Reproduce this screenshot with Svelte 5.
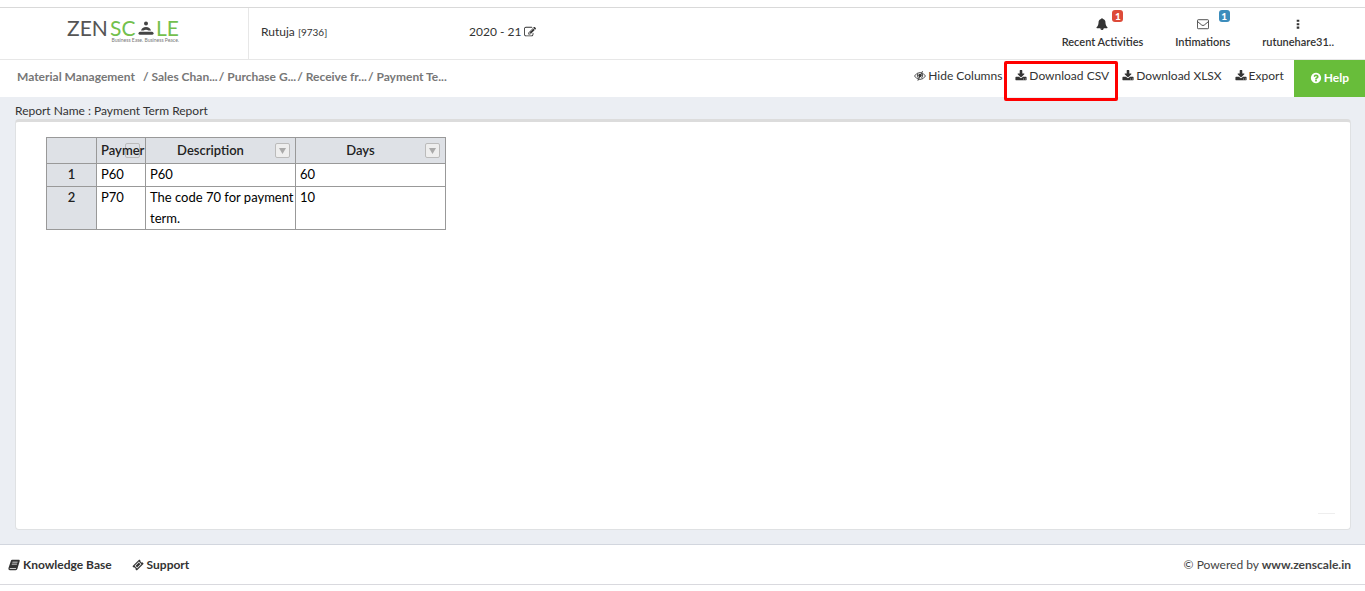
<script>
  const paths = {
    bell: 'M912 1696q0-16-16-16-59 0-101.500-42.500t-42.500-101.500q0-16-16-16t-16 16q0 73 51.500 124.500t124.500 51.500q16 0 16-16zm816-288q0 52-38 90t-90 38h-448q0 106-75 181t-181 75-181-75-75-181h-448q-52 0-90-38t-38-90q50-42 91-88t85-119.500 74.500-158.500 50-206 19.500-260q0-152 117-282.500t307-158.500q-8-19-8-39 0-40 28-68t68-28 68 28 28 68q0 20-8 39 190 28 307 158.500t117 282.500q0 139 19.500 260t50 206 74.500 158.500 85 119.500 91 88z',
    download: 'M1344 1344q0-26-19-45t-45-19-45 19-19 45 19 45 45 19 45-19 19-45zm256 0q0-26-19-45t-45-19-45 19-19 45 19 45 45 19 45-19 19-45zm128-224v320q0 40-28 68t-68 28h-1472q-40 0-68-28t-28-68v-320q0-40 28-68t68-28h465l135 136q58 56 136 56t136-56l136-136h464q40 0 68 28t28 68zm-325-569q17 41-14 70l-448 448q-18 19-45 19t-45-19l-448-448q-31-29-14-70 17-39 59-39h256v-448q0-26 19-45t45-19h256q26 0 45 19t19 45v448h256q42 0 59 39z',
    question: 'M1024 1376v-192q0-14-9-23t-23-9h-192q-14 0-23 9t-9 23v192q0 14 9 23t23 9h192q14 0 23-9t9-23zm256-672q0-88-55.500-163t-138.500-116-170-41q-243 0-371 213-15 24 8 42l132 100q7 6 19 6 16 0 25-12 53-68 86-92 34-24 86-24 48 0 85.500 26t37.500 59q0 38-20 61t-68 45q-63 28-115.500 86.500t-52.500 125.500v36q0 14 9 23t23 9h192q14 0 23-9t9-23q0-19 21.500-49.500t54.500-49.500q32-18 49-28.500t46-35 44.500-48 28-60.500 12.500-81zm384 192q0 209-103 385.500t-279.500 279.500-385.500 103-385.500-103-279.500-279.500-103-385.500 103-385.500 279.500-279.500 385.500-103 385.500 103 279.500 279.500 103 385.500z',
    edit: 'M888 1184l116-116-152-152-116 116v56h96v96h56zm440-720q-16-16-33 1l-350 350q-17 17-1 33t33-1l350-350q17-17 1-33zm80 594v190q0 119-84.500 203.500t-203.500 84.500h-832q-119 0-203.500-84.500t-84.500-203.500v-832q0-119 84.500-203.500t203.500-84.500h832q63 0 117 25 15 7 18 23 3 17-9 29l-49 49q-14 14-32 8-23-6-45-6h-832q-66 0-113 47t-47 113v832q0 66 47 113t113 47h832q66 0 113-47t47-113v-126q0-13 9-22l64-64q15-15 35-7t20 29zm-96-738l288 288-672 672h-288v-288zm444 132l-92 92-288-288 92-92q28-28 68-28t68 28l152 152q28 28 28 68t-28 68z'
  };
  const crumbs = ['Sales Chan...', 'Purchase G...', 'Receive fr...', 'Payment Te...'];
  const columns = ['Payment Term Code', 'Description', 'Days'];
  const rows = [
    ['P60', 'P60', '60'],
    ['P70', 'The code 70 for payment\nterm.', '10']
  ];
</script>

{#snippet icon(name)}
  <svg class="icon" viewBox="0 0 1792 1792" aria-hidden="true"><path d={paths[name]} /></svg>
{/snippet}

<div class="page">
  <header>
    <a class="logo" href="#home">
      <span class="wordmark">
        <span>ZEN</span>
        <span class="green">SC</span>
        <svg class="figure" viewBox="0 0 16 14" aria-hidden="true">
          <circle cx="8" cy="2.500" r="2" />
          <path d="M3 9.500q1-3.500 5-3.500t5 3.500h-2.500q-2.500-1.500-5 0z" />
          <path d="M2 10.700h12q1.500 0 1.500 1.500t-1.500 1.500h-12q-1.500 0-1.500-1.500t1.500-1.500z" />
        </svg>
        <span class="green">LE</span>
      </span>
      <span class="tagline">Business Ease. Business Peace.</span>
    </a>
    <div class="user">Rutuja <small>[9736]</small></div>
    <button class="year">2020 - 21 {@render icon('edit')}</button>
    <nav class="tools">
      <a href="#activities">
        <span class="glyph">{@render icon('bell')}<b class="badge red">1</b></span>
        Recent Activities
      </a>
      <a href="#intimations">
        <span class="glyph">
          <svg class="icon" viewBox="0 0 14 14" aria-hidden="true">
            <path class="line" d="M1.500 2h11q1 0 1 1v8.500q0 1-1 1h-11q-1 0-1-1v-8.500q0-1 1-1zM.7 4.200l4.800 4q1.500 1.200 3 0l4.800-4" />
          </svg>
          <b class="badge blue">1</b>
        </span>
        Intimations
      </a>
      <a href="#account">
        <span class="glyph">
          <svg class="icon" viewBox="0 0 14 14" aria-hidden="true">
            <path d="M5.500 2h3v2.500h-3zM5.500 6h3v2.500h-3zM5.500 10h3v2.500h-3z" />
          </svg>
        </span>
        rutunehare31..
      </a>
    </nav>
  </header>

  <div class="bar">
    <nav class="crumbs">
      <a class="root" href="#material">Material Management</a>
      {#each crumbs as crumb}<span>/ <a href="#crumb">{crumb}</a></span>{/each}
    </nav>
    <div class="actions">
      <button>
        <svg class="icon" viewBox="0 0 14 14" aria-hidden="true">
          <path class="line" d="M.6 7q2.400-4 6.400-4t6.400 4q-2.400 4-6.400 4t-6.400-4z" />
          <path class="line" d="M4.300 4.500q-1.300 3 1 5M9.700 4.500q1.300 3-1 5M10 1.300l-5.500 11.200" />
          <circle cx="7" cy="6.500" r="2" />
        </svg>
        Hide Columns
      </button>
      <button class="marked">{@render icon('download')} Download CSV</button>
      <button>{@render icon('download')} Download XLSX</button>
      <button class="export">{@render icon('download')} Export</button>
      <button class="help">{@render icon('question')} Help</button>
    </div>
  </div>

  <main>
    <h1>Report Name : Payment Term Report</h1>
    <section>
      <table>
        <colgroup><col class="number" /><col class="code" /><col /><col /></colgroup>
        <thead>
          <tr>
            <td></td>
            {#each columns as column, i}
              <th scope="col">
                <div class="head" class:clipped={i === 0}>
                  <button class="filter" aria-label="Filter {column}">
                    <svg viewBox="0 0 8 8" aria-hidden="true"><path d="M0 1h8l-4 7z" /></svg>
                  </button>
                  <span>{i === 0 ? 'Paymer' : column}</span>
                </div>
              </th>
            {/each}
          </tr>
        </thead>
        <tbody>
          {#each rows as row, i}
            <tr>
              <th scope="row">{i + 1}</th>
              {#each row as cell}<td>{cell}</td>{/each}
            </tr>
          {/each}
        </tbody>
      </table>
      <hr />
    </section>
  </main>

  <footer>
    <a href="#knowledge">
      <svg class="icon" viewBox="0 0 14 14" aria-hidden="true">
        <path fill-rule="evenodd" d="M5 1h8q1 .3.700 1.300l-2.700 9.200q-.4 1.500-2 1.500h-7q-2-.3-1.500-2.200l2.700-8.300q.4-1.500 1.800-1.500zM5.300 3.300l-.3.900h6l.3-.9zM4.600 5.400l-.3.900h6l.3-.9zM2 10.800q-.3 1 .6 1h6q.7 0 .9-1z" />
      </svg>
      Knowledge Base
    </a>
    <a href="#support">
      <svg class="icon" viewBox="0 0 14 14" aria-hidden="true">
        <path fill-rule="evenodd" d="M8.500.5l1.500 1.500q-.3 1.200.6 1.800.8.500 1.500.1l1.500 1.600-8 8-1.600-1.600q.4-1-.3-1.700-.8-.6-1.700-.2l-1.500-1.500zM8 3l-5 5 3 3 5-5zM8 4.200l1.800 1.800-3.800 3.800-1.800-1.800z" />
      </svg>
      Support
    </a>
    <p>© Powered by <a href="#zenscale">www.zenscale.in</a></p>
  </footer>
</div>

<style>
  :global(body) {
    margin: 0;
  }
  .page {
    box-sizing: border-box;
    display: flex;
    flex-direction: column;
    min-height: 100vh;
    padding: 7px 0 6px;
    background: #fff;
    color: #333;
    font: 12px/18px Lato, sans-serif;
  }
  a {
    color: inherit;
    text-decoration: none;
  }
  button {
    padding: 0;
    border: 0;
    background: none;
    color: inherit;
    font: inherit;
    white-space: nowrap;
  }
  .icon {
    width: 12px;
    height: 12px;
    fill: currentColor;
    vertical-align: -2px;
  }
  .line {
    fill: none;
    stroke: currentColor;
  }

  header {
    display: flex;
    height: 51px;
    border-top: 1px solid #d9d9d9;
    border-bottom: 1px solid #e7e7e7;
  }
  .logo {
    box-sizing: border-box;
    display: flex;
    flex-direction: column;
    width: 249px;
    padding: 10px 69px 0 67px;
    border-right: 1px solid #e7e7e7;
    color: #555;
  }
  .wordmark {
    display: flex;
    align-items: center;
    justify-content: space-between;
    font-size: 21px;
    line-height: 20px;
  }
  .green {
    color: #73c04d;
  }
  .figure {
    width: 16px;
    height: 14px;
    fill: #444;
  }
  .tagline {
    align-self: flex-end;
    color: #777;
    font-size: 5px;
    line-height: 5px;
  }
  .user {
    width: 208px;
    padding: 15px 0 0 12px;
  }
  small {
    font-size: 10px;
  }
  .year {
    align-self: flex-start;
    padding-top: 15px;
  }
  .tools {
    display: flex;
    gap: 32px;
    margin-left: auto;
    padding-right: 31px;
    font-size: 11px;
    font-weight: 600;
  }
  .tools a {
    display: flex;
    flex-direction: column;
    align-items: center;
  }
  .glyph {
    position: relative;
    height: 16px;
    padding-top: 9px;
    line-height: 14px;
  }
  .badge {
    position: absolute;
    top: 2px;
    left: 16px;
    width: 11px;
    border-radius: 3px;
    color: #fff;
    font-size: 10px;
    line-height: 12px;
    text-align: center;
  }
  .red {
    background: #dd4b39;
  }
  .blue {
    left: 22px;
    background: #3c8dbc;
  }

  .bar {
    display: flex;
    justify-content: space-between;
    height: 37px;
  }
  .crumbs {
    display: flex;
    gap: 1px;
    padding: 8px 0 0 17px;
    color: #777;
    font-weight: 700;
    white-space: nowrap;
  }
  .root {
    margin-right: 7px;
  }
  .actions {
    display: flex;
  }
  .actions button {
    display: flex;
    align-items: flex-start;
    gap: 2px;
    padding: 7px 0 0 13px;
  }
  .actions .icon {
    margin-top: 3px;
  }
  .actions .marked {
    position: relative;
  }
  .marked::after {
    content: '';
    position: absolute;
    top: 1px;
    right: -9px;
    left: 2px;
    height: 34px;
    border: 3px solid #f00;
    border-radius: 2px;
  }
  .actions .export {
    margin-right: 10px;
  }
  .actions .help {
    padding: 9px 16px 0;
    background: #68bd3a;
    color: #fff;
    font-weight: 700;
  }

  main {
    display: flex;
    flex: 1;
    flex-direction: column;
    padding: 5px 14px 14px 15px;
    background: #ebeef3;
  }
  h1 {
    margin: 0;
    font-size: 12px;
    font-weight: 400;
    line-height: 17px;
  }
  section {
    display: flex;
    flex: 1;
    flex-direction: column;
    padding: 15px 15px 15px 30px;
    border: 1px solid #dfe1e3;
    border-top: 3px solid #dcdcdc;
    border-radius: 4px;
    background: #fff;
  }
  table {
    width: 400px;
    border-collapse: collapse;
    table-layout: fixed;
    color: #222;
    font-size: 13px;
    line-height: 21px;
  }
  .number {
    width: 50px;
  }
  .code {
    width: 49px;
  }
  tbody tr {
    height: 23px;
  }
  td,
  th {
    padding: 0 4px;
    border: 1px solid #999;
    text-align: left;
    vertical-align: top;
  }
  tbody td {
    padding-right: 0;
    color: #000;
    white-space: pre;
  }
  thead td,
  thead th,
  tbody th {
    background: #dee1e6;
    font-weight: 600;
    text-align: center;
  }
  tbody th {
    border-top-color: #bbb;
  }
  thead th {
    padding: 2px 4px;
  }
  .head {
    position: relative;
    display: flex;
    align-items: center;
    justify-content: center;
    padding-right: 20px;
  }
  .head span {
    position: relative;
  }
  .clipped {
    justify-content: flex-start;
    margin-right: -4px;
    padding: 0;
  }
  .filter {
    position: absolute;
    top: 3px;
    right: 1px;
    box-sizing: border-box;
    width: 15px;
    height: 15px;
    border: 1px solid #bbb;
    border-radius: 2px;
    background: #eee;
    line-height: 0;
  }
  .clipped .filter {
    right: 5px;
    background: none;
  }
  .clipped .filter svg {
    visibility: hidden;
  }
  .filter svg {
    width: 7px;
    height: 7px;
    fill: #aaa;
  }
  hr {
    width: 17px;
    margin: auto 0 0 auto;
    border: 0;
    border-top: 1px solid #eee;
  }

  footer {
    display: flex;
    gap: 20px;
    align-items: center;
    height: 39px;
    padding: 0 14px 0 8px;
    border-top: 1px solid #d2d6de;
    border-bottom: 1px solid #d9d9de;
  }
  footer a {
    font-weight: 700;
  }
  footer p {
    margin: 0 0 0 auto;
    color: #444;
  }
</style>
